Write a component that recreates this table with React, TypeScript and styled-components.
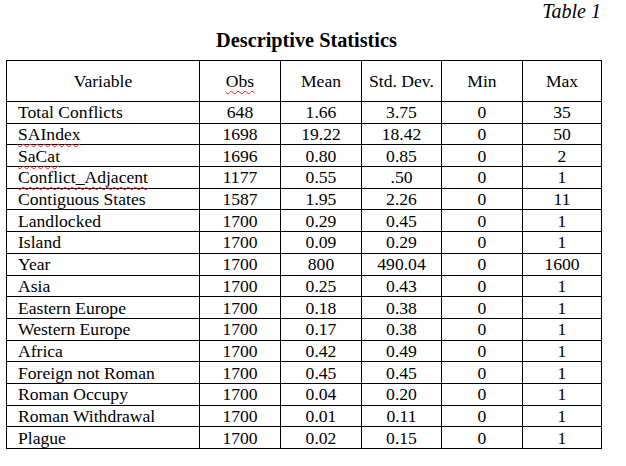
import React from "react";
import styled, { createGlobalStyle } from "styled-components";

const Global = createGlobalStyle`
  html, body { margin: 0; padding: 0; background: #ffffff; }
  body { font-family: "Liberation Serif", "Times New Roman", serif; color: #000; }
`;

const Page = styled.div`
  width: 626px;
  height: 466px;
  background: #fff;
  overflow: hidden;
`;

const Caption = styled.div`
  height: 22px;
  line-height: 22px;
  font-size: 20px;
  font-style: italic;
  text-align: right;
  padding-right: 25px;
`;

const Title = styled.h1`
  margin: 7px 0 0 0;
  height: 22px;
  line-height: 22px;
  font-size: 20.3px;
  font-weight: bold;
  text-align: center;
  width: 613px;
`;

const Table = styled.table`
  margin: 9px 0 0 6px;
  border-collapse: collapse;
  table-layout: fixed;
  width: 596px;
  font-family: "Liberation Serif", "Times New Roman", serif;
  font-size: 17.6px;
  color: #000;
`;

const HeadCell = styled.th`
  height: 40px;
  padding: 0;
  border: 1px solid #000;
  font-weight: normal;
  text-align: center;
  vertical-align: middle;
  line-height: 20px;
`;

const Cell = styled.td<{ $left?: boolean }>`
  height: 20.69px;
  padding: 0;
  border: 1px solid #000;
  line-height: 20px;
  vertical-align: middle;
  text-align: ${(p) => (p.$left ? "left" : "center")};
  padding-left: ${(p) => (p.$left ? "11px" : "0")};
  white-space: nowrap;
`;

const Spell = styled.span`
  text-decoration-line: underline;
  text-decoration-style: wavy;
  text-decoration-color: #ff1a1a;
  text-decoration-thickness: 1.2px;
  text-underline-offset: 3px;
`;

type Row = {
  name: string;
  spell?: boolean;
  obs: string;
  mean: string;
  sd: string;
  min: string;
  max: string;
};

const rows: Row[] = [
  { name: "Total Conflicts", obs: "648", mean: "1.66", sd: "3.75", min: "0", max: "35" },
  { name: "SAIndex", spell: true, obs: "1698", mean: "19.22", sd: "18.42", min: "0", max: "50" },
  { name: "SaCat", spell: true, obs: "1696", mean: "0.80", sd: "0.85", min: "0", max: "2" },
  { name: "Conflict_Adjacent", spell: true, obs: "1177", mean: "0.55", sd: ".50", min: "0", max: "1" },
  { name: "Contiguous States", obs: "1587", mean: "1.95", sd: "2.26", min: "0", max: "11" },
  { name: "Landlocked", obs: "1700", mean: "0.29", sd: "0.45", min: "0", max: "1" },
  { name: "Island", obs: "1700", mean: "0.09", sd: "0.29", min: "0", max: "1" },
  { name: "Year", obs: "1700", mean: "800", sd: "490.04", min: "0", max: "1600" },
  { name: "Asia", obs: "1700", mean: "0.25", sd: "0.43", min: "0", max: "1" },
  { name: "Eastern Europe", obs: "1700", mean: "0.18", sd: "0.38", min: "0", max: "1" },
  { name: "Western Europe", obs: "1700", mean: "0.17", sd: "0.38", min: "0", max: "1" },
  { name: "Africa", obs: "1700", mean: "0.42", sd: "0.49", min: "0", max: "1" },
  { name: "Foreign not Roman", obs: "1700", mean: "0.45", sd: "0.45", min: "0", max: "1" },
  { name: "Roman Occupy", obs: "1700", mean: "0.04", sd: "0.20", min: "0", max: "1" },
  { name: "Roman Withdrawal", obs: "1700", mean: "0.01", sd: "0.11", min: "0", max: "1" },
  { name: "Plague", obs: "1700", mean: "0.02", sd: "0.15", min: "0", max: "1" },
];

const widths = [193, 81, 81, 80, 81, 79];

export default function App() {
  return (
    <Page>
      <Global />
      <Caption>Table 1</Caption>
      <Title>Descriptive Statistics</Title>
      <Table>
        <colgroup>
          {widths.map((w, i) => (
            <col key={i} style={{ width: w }} />
          ))}
        </colgroup>
        <thead>
          <tr>
            <HeadCell>Variable</HeadCell>
            <HeadCell>
              <Spell>Obs</Spell>
            </HeadCell>
            <HeadCell>Mean</HeadCell>
            <HeadCell>Std. Dev.</HeadCell>
            <HeadCell>Min</HeadCell>
            <HeadCell>Max</HeadCell>
          </tr>
        </thead>
        <tbody>
          {rows.map((r) => (
            <tr key={r.name}>
              <Cell $left>{r.spell ? <Spell>{r.name}</Spell> : r.name}</Cell>
              <Cell>{r.obs}</Cell>
              <Cell>{r.mean}</Cell>
              <Cell>{r.sd}</Cell>
              <Cell>{r.min}</Cell>
              <Cell>{r.max}</Cell>
            </tr>
          ))}
        </tbody>
      </Table>
    </Page>
  );
}
